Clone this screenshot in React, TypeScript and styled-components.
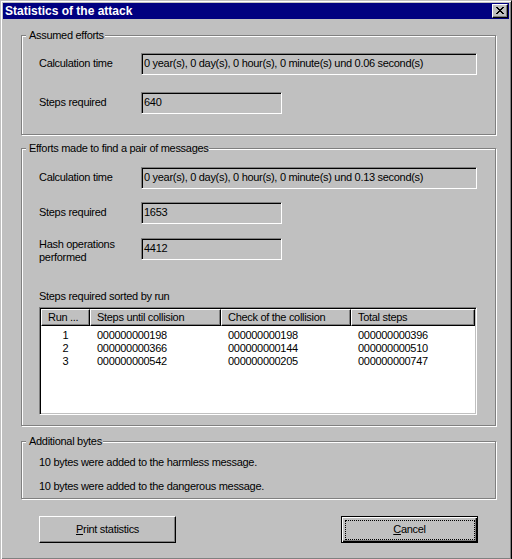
import React from "react";
import styled, { createGlobalStyle } from "styled-components";

const GlobalStyle = createGlobalStyle`
  html, body { margin: 0; padding: 0; overflow: hidden; background: #c0c0c0; }
  body {
    font-family: "Liberation Sans", Arial, sans-serif;
    font-size: 11px;
    letter-spacing: -0.3px;
    color: #000;
  }
  * { box-sizing: border-box; }
`;

const Window = styled.div`
  width: 512px;
  height: 560px;
  background: #c0c0c0;
  border: 1px solid;
  border-color: #c0c0c0 #000 #000 #c0c0c0;
  box-shadow: inset 1px 1px 0 #fff, inset -1px -1px 0 #808080;
  padding: 2px;
  display: flex;
  flex-direction: column;
`;

const TitleBar = styled.div`
  height: 16px;
  background: #000080;
  color: #fff;
  display: flex;
  align-items: center;
  justify-content: space-between;
  padding: 0 1px 0 2px;
`;

const TitleText = styled.span`
  font-weight: bold;
  font-size: 12px;
  letter-spacing: 0;
  line-height: 16px;
  white-space: nowrap;
`;

const CloseButton = styled.button`
  width: 16px;
  height: 14px;
  padding: 0;
  margin: 0;
  background: #c0c0c0;
  border: 1px solid;
  border-color: #fff #000 #000 #fff;
  box-shadow: inset -1px -1px 0 #808080;
  display: flex;
  align-items: flex-start;
  justify-content: flex-start;
  svg { display: block; margin: 2px 0 0 3px; }
`;

const Client = styled.div`
  display: flex;
  flex-direction: column;
  padding-left: 18px;
`;

const GroupBox = styled.section<{ $mt: number; $h: number; $pad: string }>`
  position: relative;
  margin-top: ${(p) => p.$mt}px;
  width: 475px;
  height: ${(p) => p.$h}px;
  border: 1px solid #808080;
  box-shadow: inset 1px 1px 0 #fff, 1px 1px 0 #fff;
  padding: ${(p) => p.$pad};
  display: flex;
  flex-direction: column;
`;

const GroupLabel = styled.span`
  position: absolute;
  top: -7px;
  left: 4px;
  padding: 0 1px 0 3px;
  background: #c0c0c0;
  line-height: 13px;
  white-space: nowrap;
`;

const FieldRow = styled.div<{ $mt?: number }>`
  display: grid;
  grid-template-columns: 102px auto;
  align-items: start;
  margin-top: ${(p) => p.$mt ?? 0}px;
`;

const FieldLabel = styled.label<{ $pt?: number }>`
  line-height: 13px;
  padding-top: ${(p) => p.$pt ?? 4}px;
`;

const ReadOnlyField = styled.div<{ $w: number }>`
  width: ${(p) => p.$w}px;
  height: 22px;
  border: 1px solid;
  border-color: #808080 #fff #fff #808080;
  box-shadow: inset 1px 1px 0 #000;
  padding: 0 2px;
  line-height: 19px;
  white-space: nowrap;
  overflow: hidden;
`;

const Caption = styled.div<{ $mt: number }>`
  margin-top: ${(p) => p.$mt}px;
  line-height: 13px;
`;

const ListFrame = styled.div`
  margin-top: 4px;
  width: 438px;
  height: 112px;
  border: 1px solid;
  border-color: #808080 #fff #fff #808080;
  box-shadow: inset 1px 1px 0 #000, inset -1px -1px 0 #c0c0c0;
  padding: 1px;
  background: #fff;
  display: flex;
  flex-direction: column;
`;

const HeaderRow = styled.div`
  display: flex;
  height: 17px;
  flex: none;
`;

const HeaderCell = styled.div<{ $w: number }>`
  width: ${(p) => p.$w}px;
  flex: none;
  background: #c0c0c0;
  border: 1px solid;
  border-color: #fff #000 #000 #fff;
  box-shadow: inset -1px -1px 0 #808080;
  padding: 0 6px;
  line-height: 14px;
  white-space: nowrap;
  overflow: hidden;
`;

const ListBody = styled.div`
  padding-top: 3px;
  display: flex;
  flex-direction: column;
`;

const ListRow = styled.div`
  display: flex;
  height: 13px;
  line-height: 13px;
`;

const Cell = styled.div<{ $w: number; $center?: boolean }>`
  width: ${(p) => p.$w}px;
  flex: none;
  padding-left: ${(p) => (p.$center ? 0 : 7)}px;
  text-align: ${(p) => (p.$center ? "center" : "left")};
  white-space: nowrap;
`;

const InfoList = styled.div`
  display: flex;
  flex-direction: column;
  gap: 11px;
`;

const InfoLine = styled.div`
  line-height: 13px;
`;

const ButtonBar = styled.div`
  margin-top: 17px;
  margin-left: 18px;
  width: 439px;
  display: flex;
  justify-content: space-between;
`;

const PushButton = styled.button<{ $default?: boolean }>`
  position: relative;
  width: 137px;
  height: 27px;
  margin: 0;
  padding: 0;
  font: inherit;
  letter-spacing: inherit;
  color: #000;
  background: #c0c0c0;
  border: 1px solid;
  border-color: ${(p) => (p.$default ? "#000" : "#fff #000 #000 #fff")};
  box-shadow: ${(p) =>
    p.$default
      ? "inset 1px 1px 0 #fff, inset -1px -1px 0 #000, inset -2px -2px 0 #808080"
      : "inset -1px -1px 0 #808080"};
  display: flex;
  align-items: center;
  justify-content: center;
  line-height: 13px;
`;

const FocusRing = styled.span`
  position: absolute;
  left: 3px;
  top: 3px;
  right: 2px;
  bottom: 2px;
  border: 1px dotted #000;
  pointer-events: none;
`;

const Mnemonic = styled.u`
  text-decoration: underline;
  text-underline-offset: 1px;
`;

const columns = [
  { title: "Run ...", w: 49 },
  { title: "Steps until collision", w: 131 },
  { title: "Check of the collision", w: 130 },
  { title: "Total steps", w: 124 },
];

const runs = [
  { run: "1", steps: "000000000198", check: "000000000198", total: "000000000396" },
  { run: "2", steps: "000000000366", check: "000000000144", total: "000000000510" },
  { run: "3", steps: "000000000542", check: "000000000205", total: "000000000747" },
];

const CloseGlyph = () => (
  <svg width="8" height="7" viewBox="0 0 8 7" shapeRendering="crispEdges">
    <path
      fill="#000"
      d="M0 0h2v1H0zM6 0h2v1H6zM1 1h2v1H1zM5 1h2v1H5zM2 2h4v1H2zM3 3h2v1H3zM2 4h4v1H2zM1 5h2v1H1zM5 5h2v1H5zM0 6h2v1H0zM6 6h2v1H6z"
    />
  </svg>
);

export default function App() {
  return (
    <>
      <GlobalStyle />
      <Window>
        <TitleBar>
          <TitleText>Statistics of the attack</TitleText>
          <CloseButton aria-label="Close">
            <CloseGlyph />
          </CloseButton>
        </TitleBar>
        <Client>
          <GroupBox $mt={16} $h={100} $pad="17px 17px 20px">
            <GroupLabel>Assumed efforts</GroupLabel>
            <FieldRow>
              <FieldLabel>Calculation time</FieldLabel>
              <ReadOnlyField $w={336}>
                0 year(s), 0 day(s), 0 hour(s), 0 minute(s) und 0.06 second(s)
              </ReadOnlyField>
            </FieldRow>
            <FieldRow $mt={17}>
              <FieldLabel>Steps required</FieldLabel>
              <ReadOnlyField $w={141}>640</ReadOnlyField>
            </FieldRow>
          </GroupBox>

          <GroupBox $mt={13} $h={278} $pad="18px 17px 10px">
            <GroupLabel>Efforts made to find a pair of messages</GroupLabel>
            <FieldRow>
              <FieldLabel>Calculation time</FieldLabel>
              <ReadOnlyField $w={336}>
                0 year(s), 0 day(s), 0 hour(s), 0 minute(s) und 0.13 second(s)
              </ReadOnlyField>
            </FieldRow>
            <FieldRow $mt={13}>
              <FieldLabel>Steps required</FieldLabel>
              <ReadOnlyField $w={141}>1653</ReadOnlyField>
            </FieldRow>
            <FieldRow $mt={14}>
              <FieldLabel $pt={0}>
                Hash operations
                <br />
                performed
              </FieldLabel>
              <ReadOnlyField $w={141}>4412</ReadOnlyField>
            </FieldRow>
            <Caption $mt={26}>Steps required sorted by run</Caption>
            <ListFrame>
              <HeaderRow>
                {columns.map((c) => (
                  <HeaderCell key={c.title} $w={c.w}>
                    {c.title}
                  </HeaderCell>
                ))}
              </HeaderRow>
              <ListBody>
                {runs.map((r) => (
                  <ListRow key={r.run}>
                    <Cell $w={columns[0].w} $center>
                      {r.run}
                    </Cell>
                    <Cell $w={columns[1].w}>{r.steps}</Cell>
                    <Cell $w={columns[2].w}>{r.check}</Cell>
                    <Cell $w={columns[3].w}>{r.total}</Cell>
                  </ListRow>
                ))}
              </ListBody>
            </ListFrame>
          </GroupBox>

          <GroupBox $mt={15} $h={58} $pad="14px 17px 5px">
            <GroupLabel>Additional bytes</GroupLabel>
            <InfoList>
              <InfoLine>10 bytes were added to the harmless message.</InfoLine>
              <InfoLine>10 bytes were added to the dangerous message.</InfoLine>
            </InfoList>
          </GroupBox>

          <ButtonBar>
            <PushButton>
              <span>
                <Mnemonic>P</Mnemonic>rint statistics
              </span>
            </PushButton>
            <PushButton $default>
              <FocusRing />
              <span>
                <Mnemonic>C</Mnemonic>ancel
              </span>
            </PushButton>
          </ButtonBar>
        </Client>
      </Window>
    </>
  );
}
